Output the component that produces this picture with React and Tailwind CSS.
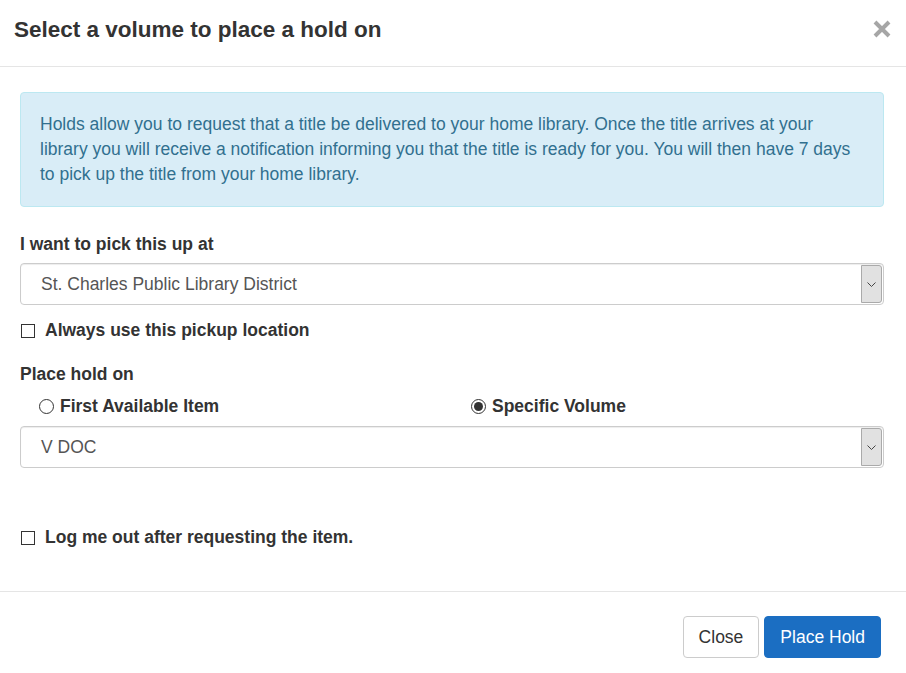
import React, { useState } from "react";

function SelectBox({ value }) {
    return (
        <div className="flex h-[42px] items-stretch rounded-[4px] border border-[#ccc] bg-white shadow-[inset_0_1px_1px_rgba(0,0,0,0.075)]">
            <div className="flex flex-1 items-center pl-[20px] text-[17.5px] text-[#555]">{value}</div>
            <div className="my-[1px] mr-[1px] flex w-[21px] items-center justify-center rounded-r-[3px] border border-[#aaa] bg-[#e1e1e1]">
                <svg width="9" height="5" viewBox="0 0 9 5">
                    <path d="M0.5 0.5 L4.5 4.5 L8.5 0.5" fill="none" stroke="#444" strokeWidth="1" />
                </svg>
            </div>
        </div>
    );
}

function Check({ label }) {
    return (
        <label className="flex h-[23px] items-center">
            <span className="ml-[1px] mr-[10px] h-[14px] w-[14px] border border-[#333] bg-white" />
            <span className="text-[17.5px] font-bold text-[#333]">{label}</span>
        </label>
    );
}

function Radio({ label, checked }) {
    return (
        <label className="flex h-[23px] items-center">
            <span className="mr-[6px] flex h-[15px] w-[15px] items-center justify-center rounded-full border border-[#333] bg-white">
                {checked && <span className="h-[9px] w-[9px] rounded-full bg-[#333]" />}
            </span>
            <span className="text-[17.5px] font-bold text-[#333]">{label}</span>
        </label>
    );
}

export default function App() {
    const [open] = useState(true);
    if (!open) return null;

    return (
        <div className="min-h-[673px] w-[906px] bg-white font-['Liberation_Sans',Arial,sans-serif] text-[#333]">
            <header className="flex h-[67px] items-center justify-between border-b border-[#e5e5e5] pb-[6px] pl-[14px] pr-[15px]">
                <h4 className="text-[22.5px] font-bold leading-none text-[#333]">Select a volume to place a hold on</h4>
                <svg width="18" height="18" viewBox="0 0 18 18" className="-mt-[3px]">
                    <path d="M2 2 L16 16 M16 2 L2 16" stroke="#a6a6a6" strokeWidth="4" strokeLinecap="butt" />
                </svg>
            </header>

            <div className="pl-[20px] pr-[22px] pt-[25px]">
                <div className="rounded-[4px] border border-[#bce8f1] bg-[#d9edf7] pb-[19px] pl-[19px] pr-[28px] pt-[19px] text-[17.5px] leading-[25px] text-[#31708f]">
                    Holds allow you to request that a title be delivered to your home library. Once the title arrives at your library you will receive a notification informing you that the title is ready for you. You will then have 7 days to pick up the title from your home library.
                </div>

                <div className="mt-[26px] h-[23px] text-[17.5px] font-bold leading-[23px]">I want to pick this up at</div>
                <div className="mt-[7px]">
                    <SelectBox value="St. Charles Public Library District" />
                </div>

                <div className="mt-[14px]">
                    <Check label="Always use this pickup location" />
                </div>

                <div className="mt-[21px] h-[23px] text-[17.5px] font-bold leading-[23px]">Place hold on</div>
                <div className="mt-[9px] grid grid-cols-2">
                    <div className="pl-[19px]">
                        <Radio label="First Available Item" />
                    </div>
                    <div className="pl-[19px]">
                        <Radio label="Specific Volume" checked />
                    </div>
                </div>
                <div className="mt-[8px]">
                    <SelectBox value="V DOC" />
                </div>

                <div className="mt-[58px]">
                    <Check label="Log me out after requesting the item." />
                </div>
            </div>

            <footer className="mt-[42px] flex justify-end gap-[5px] border-t border-[#e5e5e5] pl-[26px] pr-[25px] pt-[24px]">
                <button className="h-[42px] rounded-[4px] border border-[#ccc] bg-white px-[15px] text-[17.5px] text-[#333]">Close</button>
                <button className="h-[42px] rounded-[4px] border border-[#1b6ec2] bg-[#1b6ec2] px-[15px] text-[17.5px] text-white">Place Hold</button>
            </footer>
        </div>
    );
}
